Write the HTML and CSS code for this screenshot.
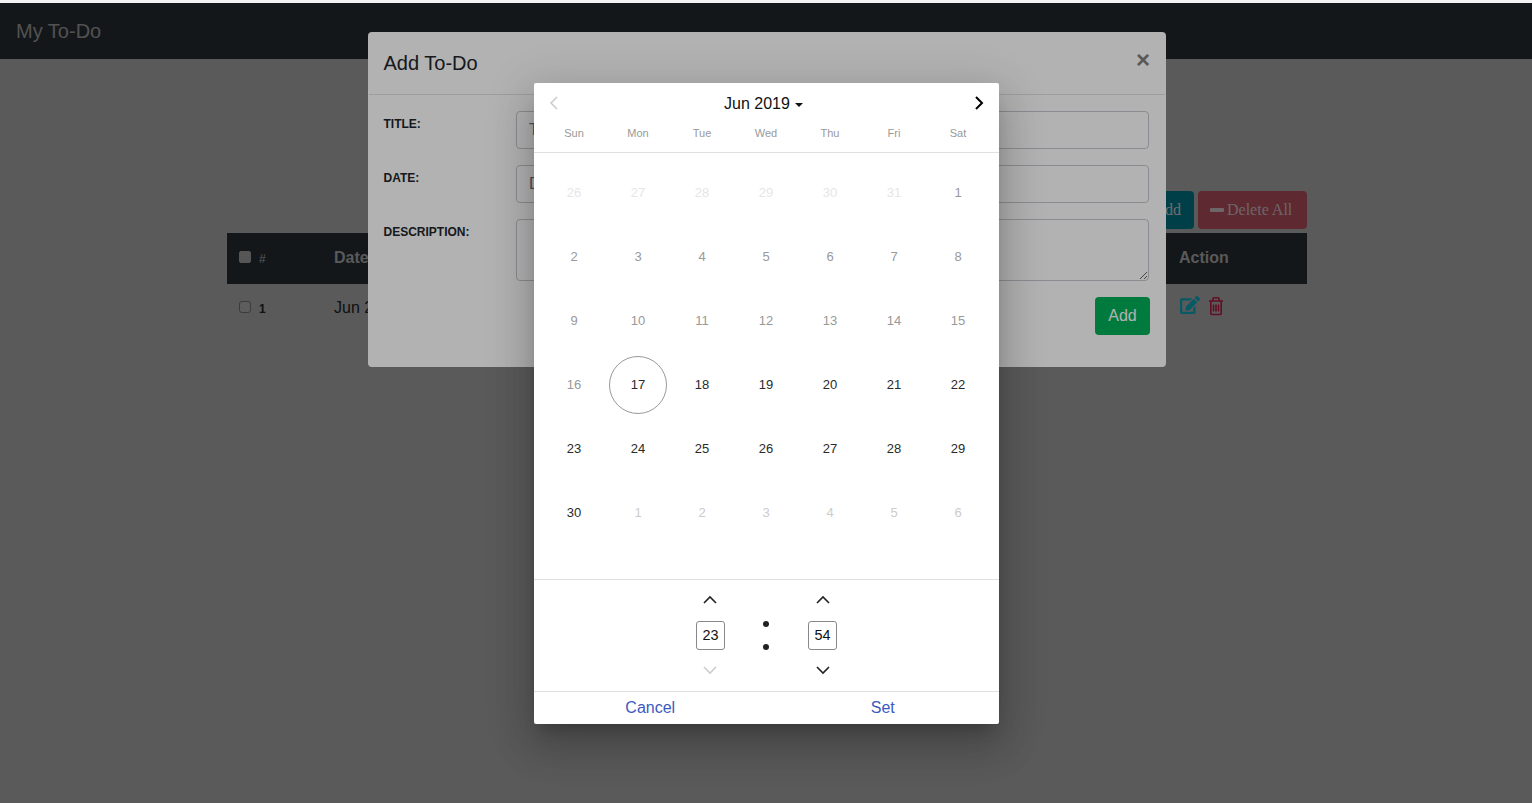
FILE: index.html
```html
<!DOCTYPE html>
<html>

<head>
    <title>My To-Do</title>
    <meta name="viewport" content="width=device-width, initial-scale=1.0">
    <link rel="stylesheet" href="styles.css">
</head>

<body>
    <nav class="navbar">My To-Do</nav>

    <main class="container">
        <div class="toolbar">
            <button class="btn btn-teal">+ Add</button>
            <button class="btn btn-red"><span class="minus"></span>Delete All</button>
        </div>
        <div class="table-row table-head">
            <div class="col-check"><input type="checkbox"><span class="num">#</span></div>
            <div class="col-date">Date</div>
            <div class="col-action">Action</div>
        </div>
        <div class="table-row">
            <div class="col-check"><input type="checkbox"><span class="num num-bold">1</span></div>
            <div class="col-date">Jun 20, 2019</div>
            <div class="col-action">
                <svg class="icon-edit" viewBox="0 0 576 512"><path d="M402.6 83.2l90.2 90.2c3.8 3.8 3.8 10 0 13.8L274.4 405.6l-92.8 10.3c-12.4 1.4-22.9-9.1-21.5-21.5l10.3-92.8L388.8 83.2c3.8-3.8 10-3.8 13.8 0zm162-22.9l-48.8-48.8c-15.2-15.2-39.9-15.2-55.2 0l-35.4 35.4c-3.8 3.8-3.8 10 0 13.8l90.2 90.2c3.8 3.8 10 3.8 13.8 0l35.4-35.4c15.2-15.3 15.2-40 0-55.2zM384 346.2V448H64V128h229.8c3.2 0 6.2-1.3 8.5-3.5l40-40c7.6-7.6 2.2-20.5-8.5-20.5H48C21.5 64 0 85.5 0 112v352c0 26.5 21.5 48 48 48h352c26.5 0 48-21.5 48-48V306.2c0-10.7-12.9-16-20.5-8.5l-40 40c-2.2 2.3-3.5 5.3-3.5 8.5z"/></svg>
                <svg class="icon-trash" viewBox="0 0 16 20"><path d="M1 5h14M5 5V2.6c0-.5.4-.9.9-.9h4.2c.5 0 .9.4.9.9V5M2.8 5.5v12c0 .6.4 1 1 1h8.4c.6 0 1-.4 1-1v-12M5.5 8.5v7M8 8.5v7M10.5 8.5v7"/></svg>
            </div>
        </div>
    </main>

    <div class="backdrop"></div>

    <section class="modal">
        <header class="modal-head">
            <h5>Add To-Do</h5>
            <span class="close">&times;</span>
        </header>
        <div class="modal-body">
            <div class="field">
                <label>TITLE:</label>
                <input type="text" placeholder="Title">
            </div>
            <div class="field">
                <label>DATE:</label>
                <input type="text" placeholder="Date">
            </div>
            <div class="field">
                <label>DESCRIPTION:</label>
                <textarea></textarea>
            </div>
            <div class="modal-actions"><button class="btn btn-green">Add</button></div>
        </div>
    </section>

    <div class="backdrop"></div>

    <section class="picker">
        <div class="picker-head">
            <div class="month-row">
                <svg class="nav-arrow" viewBox="0 0 12 16"><path class="line off" d="M9 2L3 8l6 6"/></svg>
                <div class="month">Jun 2019<span class="caret"></span></div>
                <svg class="nav-arrow" viewBox="0 0 12 16"><path class="line strong" d="M3 2l6 6-6 6"/></svg>
            </div>
            <div class="weekdays">
                <span>Sun</span><span>Mon</span><span>Tue</span><span>Wed</span><span>Thu</span><span>Fri</span><span>Sat</span>
            </div>
        </div>

        <div class="days">
            <span class="faint">26</span><span class="faint">27</span><span class="faint">28</span><span class="faint">29</span><span class="faint">30</span><span class="faint">31</span><span class="past">1</span>
            <span class="past">2</span><span class="past">3</span><span class="past">4</span><span class="past">5</span><span class="past">6</span><span class="past">7</span><span class="past">8</span>
            <span class="past">9</span><span class="past">10</span><span class="past">11</span><span class="past">12</span><span class="past">13</span><span class="past">14</span><span class="past">15</span>
            <span class="past">16</span><span class="today">17</span><span>18</span><span>19</span><span>20</span><span>21</span><span>22</span>
            <span>23</span><span>24</span><span>25</span><span>26</span><span>27</span><span>28</span><span>29</span>
            <span>30</span><span class="next">1</span><span class="next">2</span><span class="next">3</span><span class="next">4</span><span class="next">5</span><span class="next">6</span>
        </div>

        <div class="time">
            <div class="time-col">
                <svg class="time-arrow shift" viewBox="0 0 16 10"><path class="line" d="M2 8l6-6 6 6"/></svg>
                <div class="time-box">23</div>
                <svg class="time-arrow shift" viewBox="0 0 16 10"><path class="line off" d="M2 2l6 6 6-6"/></svg>
            </div>
            <div class="colon"><i></i><i></i></div>
            <div class="time-col">
                <svg class="time-arrow" viewBox="0 0 16 10"><path class="line" d="M2 8l6-6 6 6"/></svg>
                <div class="time-box">54</div>
                <svg class="time-arrow" viewBox="0 0 16 10"><path class="line" d="M2 2l6 6 6-6"/></svg>
            </div>
        </div>

        <div class="picker-foot">
            <span>Cancel</span>
            <span>Set</span>
        </div>
    </section>
</body>

</html>
```

FILE: styles.css
```css
* { box-sizing: border-box; }
html { height: 100%; background: #f2f2f2; }
body { margin: 0; height: 803px; overflow: hidden; border-top: 3px solid #f2f2f2; background: #bababa; color: #212529; font-family: "Liberation Sans", Arial, sans-serif; font-size: 16px; position: relative; }

.navbar { height: 56px; padding: 0 16px; background: #293137; color: #a8a8a8; font-size: 20px; line-height: 56px; }

.container { width: 1080px; margin: 132px 0 0 227px; }
.toolbar { display: flex; justify-content: flex-end; gap: 4px; height: 38px; margin-bottom: 4px; }
.btn { height: 38px; padding: 0 12px; border: 0; border-radius: 4px; color: #fff; font-size: 16px; }
.btn-teal { background: #008393; color: #e0e0e0; font-family: "Liberation Serif", serif; width: 110px; padding-right: 13px; text-align: right; }
.btn-red { background: #c25566; color: #e0d0d4; font-family: "Liberation Serif", serif; width: 109px; text-align: left; white-space: nowrap; }
.btn-green { background: #00b058; font-family: "Liberation Sans", sans-serif; width: 55px; padding: 0; }
.minus { display: inline-block; width: 14px; height: 4px; margin-right: 3px; border-radius: 1px; background: #e0d0d4; vertical-align: 3px; }

.table-row { display: flex; padding-top: 12px; height: 48px; line-height: 24px; }
.table-head { height: 51px; padding-top: 13px; background: #293137; color: #b8b8b8; font-weight: bold; }
.col-check { display: flex; align-items: center; width: 107px; height: 24px; padding-left: 12px; }
.col-check input { appearance: none; width: 12px; height: 12px; margin: -2px 8px 0 0; border: 1px solid #7a7a7a; border-radius: 3px; background: #c0c0c0; }
.table-head .col-check input { border-color: #b0b0b0; background: #b0b0b0; border-radius: 2px; }
.col-date { flex: 1; }
.col-action { display: flex; align-items: flex-start; gap: 8px; width: 127px; margin-left: -1px; margin-right: 1px; }
.num { font-size: 12px; font-weight: normal; padding-top: 1px; }
.num-bold { font-weight: bold; }
.icon-edit { width: 20px; height: 18px; margin-left: 1px; fill: #10b8d0; }
.icon-trash { width: 16px; height: 20px; fill: none; stroke: #c81c4c; stroke-width: 1.6; }

.backdrop { position: absolute; inset: 0; background: rgba(0, 0, 0, 0.3); }

.modal { position: absolute; left: 368px; top: 29px; width: 798px; height: 335px; border: 1px solid transparent; border-radius: 4px; background: #fff; }
.modal-head { display: flex; justify-content: space-between; height: 62px; padding: 15px 15px 15px 14.5px; border-bottom: 1px solid #dee2e6; }
.modal-head h5 { margin: 0; font-size: 20px; font-weight: normal; line-height: 30px; }
.close { color: #808080; font-size: 24px; font-weight: bold; line-height: 24px; }
.modal-body { padding: 16px 15px 16px 14.5px; }
.field { display: flex; margin-bottom: 16px; }
.field label { width: 132.5px; padding-top: 4px; font-size: 12px; font-weight: bold; line-height: 18px; }
.field input, .field textarea { flex: 1; height: 38px; margin-right: 1px; padding: 6px 12px; border: 1px solid #c4cad0; border-radius: 4px; color: #495057; font-family: inherit; font-size: 16px; }
.field input::placeholder { color: #6c757d; }
.field textarea { height: 62px; }
.modal-actions { display: flex; justify-content: flex-end; }

.picker { position: absolute; left: 534px; top: 80px; width: 465px; height: 641px; display: flex; flex-direction: column; border-radius: 2px; background: #fff; box-shadow: 0 11px 15px -7px rgba(0, 0, 0, 0.2), 0 24px 38px 3px rgba(0, 0, 0, 0.14), 0 9px 46px 8px rgba(0, 0, 0, 0.12); }
.picker-head { height: 70px; border-bottom: 1px solid #e0e0e0; }
.month-row { display: flex; justify-content: space-between; align-items: center; height: 40px; padding: 0 14px; }
.nav-arrow { width: 12px; height: 16px; }
.line { fill: none; stroke: #222; stroke-width: 1.6; }
.line.strong { stroke: #000; stroke-width: 2; }
.line.off { stroke: #ccc; }
.month { margin: 2px 6px 0 0; font-size: 16px; color: #111; }
.caret { display: inline-block; width: 0; height: 0; margin-left: 5px; border-top: 4.5px solid #111; border-left: 4.5px solid transparent; border-right: 4.5px solid transparent; vertical-align: 2px; }
.weekdays { display: grid; grid-template-columns: repeat(7, 64px); padding-left: 8px; color: #999; font-size: 11px; line-height: 20px; text-align: center; }

.days { display: grid; grid-template-columns: repeat(7, 64px); grid-auto-rows: 64px; height: 427px; padding: 8px 0 0 8px; border-bottom: 1px solid #e0e0e0; color: #2a2a2a; font-size: 13px; text-align: center; line-height: 64px; }
.days .faint { color: #e6e6e6; }
.days .past { color: #999; }
.days .next { color: #ccc; }
.today { position: relative; }
.today::after { content: ""; position: absolute; left: 3px; top: 3px; width: 56px; height: 56px; border: 1px solid #999; border-radius: 50%; }

.time { display: flex; justify-content: center; height: 112px; border-bottom: 1px solid #e0e0e0; }
.time-col { display: flex; flex-direction: column; align-items: center; width: 29px; padding-top: 15px; }
.time-arrow { width: 16px; height: 10px; }
.time-arrow.shift { margin-right: 1px; }
.time-box { width: 29px; height: 29px; margin: 16px 0 15px; border: 1px solid #888; border-radius: 3px; color: #111; font-size: 14.4px; line-height: 27px; text-align: center; }
.colon { display: flex; flex-direction: column; align-items: center; gap: 17px; width: 83px; padding: 41px 1px 0 0; }
.colon i { width: 6px; height: 6px; border-radius: 50%; background: #222; }

.picker-foot { display: flex; flex: 1; color: #3b5abf; line-height: 32px; text-align: center; }
.picker-foot span { flex: 1; }
```
